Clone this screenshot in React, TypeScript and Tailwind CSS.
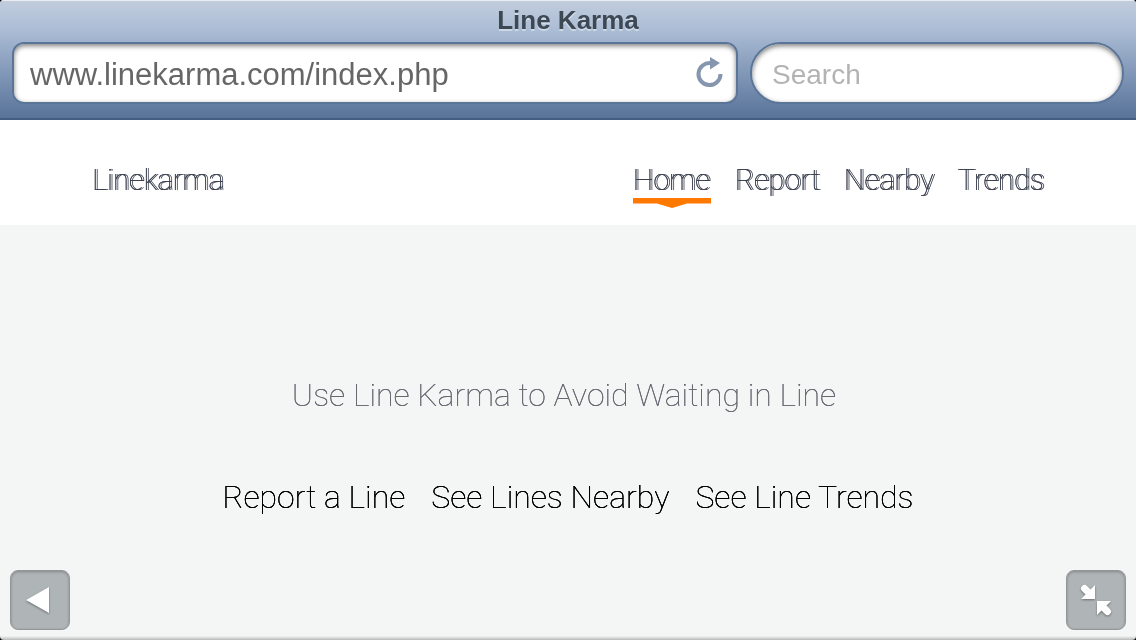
import { useState } from 'react'

const navItems = ['Home', 'Report', 'Nearby', 'Trends']
const actions = ['Report a Line', 'See Lines Nearby', 'See Line Trends']

const fieldStyle =
  'h-[62px] min-w-0 border-2 border-[#5b7598] bg-white shadow-[inset_0_2px_5px_rgba(0,0,0,0.5)]'
const cornerButton =
  'absolute bottom-[10px] flex size-[60px] items-center justify-center rounded-lg border border-[#92979a] bg-[#afb4b7] shadow-[inset_0_1px_3px_rgba(0,0,0,0.25)]'

function BrowserBar() {
  const [url, setUrl] = useState('www.linekarma.com/index.php')
  const [query, setQuery] = useState('')

  return (
    <header className="border-t border-b-2 border-t-[#e8edf2] border-b-[#415d82] bg-linear-to-b from-[#c1cddd] from-0% via-[#abbcd5] via-25% to-[#587399] px-3 pb-[14px] font-['Liberation_Sans',sans-serif] will-change-transform">
      <div className="h-[41px] pt-1 text-center text-[26px] leading-[30px] font-bold text-[#3d4855] [text-shadow:0_2px_0_rgba(255,255,255,0.4)]">
        Line Karma
      </div>
      <div className="grid grid-cols-[726fr_374fr] gap-3">
        <form
          onSubmit={e => e.preventDefault()}
          className={`flex items-center rounded-xl pr-3 pl-4 ${fieldStyle}`}
        >
          <input
            aria-label="Address"
            className="min-w-0 flex-1 bg-transparent pt-1 text-[31px] leading-9 text-[#666] outline-none"
            value={url}
            onChange={e => setUrl(e.target.value)}
          />
          <button type="button" aria-label="Reload">
            <svg width="28" height="32" viewBox="0 0 28 32" aria-hidden="true">
              <path d="M15 6.2A11 11 0 1 0 24.500 17" fill="none" stroke="#8596ae" strokeWidth="4" />
              <path d="M14 0 24 6 14 12.500Z" fill="#8596ae" />
            </svg>
          </button>
        </form>
        <input
          type="search"
          aria-label="Search"
          placeholder="Search"
          className={`rounded-full px-5 pt-1 text-[28px] leading-9 text-[#666] outline-none placeholder:text-[#b3b3b3] ${fieldStyle}`}
          value={query}
          onChange={e => setQuery(e.target.value)}
        />
      </div>
    </header>
  )
}

function SiteHeader() {
  return (
    <div className="flex h-[105px] items-start justify-between bg-white px-[92px] pt-11 text-[29px] leading-8 font-thin text-[#3c4250] will-change-transform [text-shadow:0_0_0_#3c4250,2px_0_0_#3c4250]">
      <a href="#home">Linekarma</a>
      <nav className="flex gap-6">
        {navItems.map((item, i) => (
          <a key={item} href={`#${item.toLowerCase()}`} aria-current={i === 0 ? 'page' : undefined}>
            {item}
            {i === 0 && (
              <svg className="mt-[2px] block h-[10px] w-full" viewBox="0 0 78 10" preserveAspectRatio="none" aria-hidden="true">
                <path d="M0 0H78V5.5H54L39 10 24 5.5H0Z" fill="#ff7800" />
              </svg>
            )}
          </a>
        ))}
      </nav>
    </div>
  )
}

export default function App() {
  return (
    <div className="bg-black">
      <div className="relative flex min-h-screen flex-col overflow-hidden rounded-[4px] bg-[#f4f6f5] font-[Roboto,sans-serif]">
        <BrowserBar />
        <SiteHeader />
        <main className="flex flex-1 flex-col items-center px-8 pt-[150px] pb-24 text-[32px] leading-10 font-thin will-change-transform">
          <h1 className="pr-2 text-[#686872] [text-shadow:0_0_0_#686872]">Use Line Karma to Avoid Waiting in Line</h1>
          <div className="mt-[62px] flex flex-wrap justify-center gap-[26px] text-black [text-shadow:0_0_0_#000,0_0_0_#000]">
            {actions.map(label => (
              <a key={label} href="#">{label}</a>
            ))}
          </div>
        </main>
        <div className="absolute inset-x-0 bottom-0 h-1 bg-linear-to-b from-transparent to-black/25" />
        <button type="button" aria-label="Back" className={`left-[10px] ${cornerButton}`}>
          <svg className="drop-shadow-[0_1px_1px_rgba(0,0,0,0.4)]" width="58" height="58" viewBox="0 0 58 58" aria-hidden="true">
            <path d="M15 29 38 16V42Z" fill="#fff" />
          </svg>
        </button>
        <button type="button" aria-label="Exit full screen" className={`right-[10px] ${cornerButton}`}>
          <svg className="drop-shadow-[0_1px_1px_rgba(0,0,0,0.4)]" width="58" height="58" viewBox="0 0 58 58" aria-hidden="true">
            <path d="M17.500 17.500 24 24M40.500 40.500 34 34" stroke="#fff" strokeWidth="7" strokeLinecap="round" />
            <path d="M28 14V28H14ZM30 30H44L30 44Z" fill="#fff" />
          </svg>
        </button>
      </div>
    </div>
  )
}
